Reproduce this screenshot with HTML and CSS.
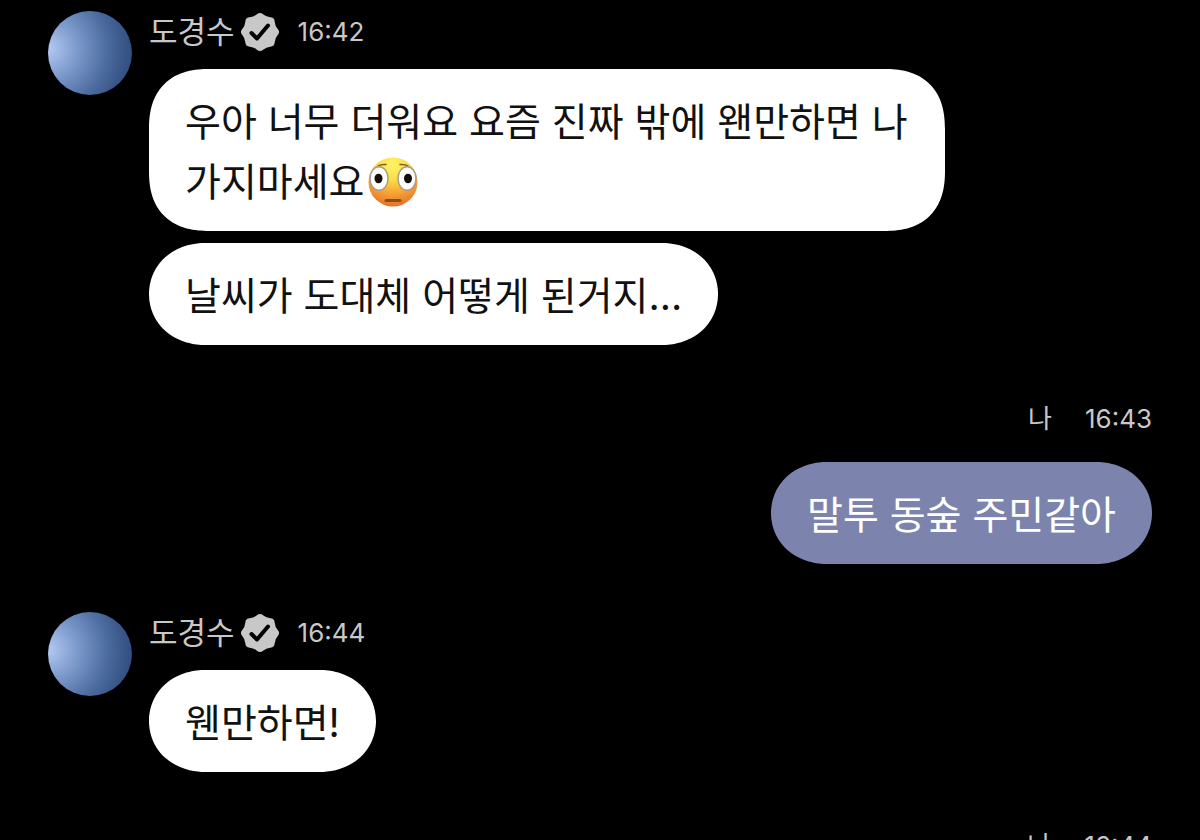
FILE: index.html
```
<!DOCTYPE html>
<html lang="ko">
<head>
  <meta charset="UTF-8">
  <meta name="viewport" content="width=device-width, initial-scale=1">
  <title>도경수</title>
  <link rel="stylesheet" href="styles.css">
</head>
<body>
  <!-- shared badge icon -->
  <svg class="defs" aria-hidden="true">
    <symbol id="verified" viewBox="0 0 40 40">
      <path class="badge-shape" d="M16.900 2.300 Q20 -.5 23.100 2.300 Q26.200 5 30.300 5.300 Q34.500 5.500 34.700 9.700 Q35 13.800 37.700 16.900 Q40.500 20 37.700 23.100 Q35 26.200 34.700 30.300 Q34.500 34.500 30.300 34.700 Q26.200 35 23.100 37.700 Q20 40.500 16.900 37.700 Q13.800 35 9.700 34.700 Q5.500 34.500 5.300 30.300 Q5 26.200 2.300 23.100 Q-.5 20 2.300 16.900 Q5 13.800 5.300 9.700 Q5.500 5.500 9.700 5.300 Q13.800 5 16.900 2.300 Z"/>
      <path class="badge-check" d="M11.500 21 L17 26.500 L28 13.500"/>
    </symbol>
  </svg>

  <main class="chat">
    <article class="message">
      <div class="avatar"></div>
      <div class="content">
        <header class="meta">
          <span class="name">도경수</span>
          <svg class="badge" role="img" aria-label="인증됨"><use href="#verified"/></svg>
          <time class="time">16:42</time>
        </header>
        <p class="bubble">우아 너무 더워요 요즘 진짜 밖에 왠만하면 나가지마세요<svg class="emoji" viewBox="0 0 50 50" role="img" aria-label="😳">
            <defs>
              <radialGradient id="face" cx=".5" cy=".15" r=".85">
                <stop offset="0" stop-color="#fff36a"/>
                <stop offset=".35" stop-color="#fbdf45"/>
                <stop offset=".65" stop-color="#f7a936"/>
                <stop offset="1" stop-color="#e8702a"/>
              </radialGradient>
            </defs>
            <circle cx="25" cy="25" r="24.500" fill="url(#face)"/>
            <path d="M10 9 Q13 7 18 7.500 M32 7.500 Q37 7 40 9" fill="none" stroke="#8a551b" stroke-width="1.500" stroke-linecap="round"/>
            <ellipse cx="11" cy="21.500" rx="9" ry="11.800" fill="#fff" stroke="#a79b8c" stroke-width="1.500"/>
            <ellipse cx="39" cy="21.500" rx="9" ry="11.800" fill="#fff" stroke="#a79b8c" stroke-width="1.500"/>
            <ellipse cx="10.500" cy="21.500" rx="4" ry="4.800" fill="#160e0b"/>
            <ellipse cx="40" cy="21.500" rx="4" ry="4.800" fill="#160e0b"/>
            <path d="M18 43.500 H32" stroke="#85501d" stroke-width="3" stroke-linecap="round"/>
          </svg></p>
        <p class="bubble single">날씨가 도대체 어떻게 된거지...</p>
      </div>
    </article>

    <article class="message mine">
      <div class="content">
        <header class="meta">
          <span class="name">나</span>
          <time class="time">16:43</time>
        </header>
        <p class="bubble single">말투 동숲 주민같아</p>
      </div>
    </article>

    <article class="message">
      <div class="avatar"></div>
      <div class="content">
        <header class="meta">
          <span class="name">도경수</span>
          <svg class="badge" role="img" aria-label="인증됨"><use href="#verified"/></svg>
          <time class="time">16:44</time>
        </header>
        <p class="bubble single">웬만하면!</p>
      </div>
    </article>

    <article class="message mine">
      <div class="content">
        <header class="meta">
          <span class="name">나</span>
          <time class="time">16:44</time>
        </header>
      </div>
    </article>
  </main>
</body>
</html>
```

FILE: styles.css
```
* {
  box-sizing: border-box;
}

body {
  margin: 0;
  background: #000;
  color: #111;
  font-family: Inter, "Noto Sans CJK KR", sans-serif;
}

.defs {
  display: none;
}

.chat {
  display: flex;
  flex-direction: column;
  gap: 48px;
  height: 100vh;
  padding: 11px 48px 0;
  overflow: hidden;
}

.message {
  display: flex;
  flex-shrink: 0;
  gap: 17px;
}

.avatar {
  flex: none;
  width: 84px;
  height: 84px;
  border-radius: 50%;
  background: radial-gradient(circle at 0 45%, #b4caf2 0, #7e9bcd 30%, #4c6b9f 62%, #263f70 100%);
}

.content {
  display: flex;
  flex: 1;
  flex-direction: column;
  align-items: flex-start;
  gap: 12px;
}

.meta {
  display: flex;
  align-items: center;
  height: 41px;
  margin-bottom: 5px;
  color: #c8c8c8;
}

.name {
  font-size: 31px;
  line-height: 40px;
}

.badge {
  width: 40px;
  height: 40px;
  margin: 0 18px 0 5px;
}

.badge-shape {
  fill: #c8c8c8;
}

.badge-check {
  fill: none;
  stroke: #000;
  stroke-width: 4;
  stroke-linecap: round;
  stroke-linejoin: round;
}

.time {
  font-size: 26px;
  line-height: 40px;
}

.bubble {
  max-width: 796px;
  margin: 0;
  padding: 23px 36px 19px;
  border-radius: 60px;
  corner-shape: superellipse(1.25);
  background: #fff;
  font-size: 39px;
  line-height: 60px;
  word-break: break-all;
}

.bubble.single {
  border-radius: 56px / 51px;
  corner-shape: superellipse(1.05);
}

.emoji {
  width: 50px;
  height: 50px;
  margin-left: 4px;
  vertical-align: -11px;
}

/* own messages, right side */
.mine .content {
  align-items: flex-end;
}

.mine .meta {
  gap: 33px;
  height: 52px;
}

.mine .name {
  font-size: 26px;
}

.mine .bubble {
  background: #7c84ae;
  color: #fff;
}
```
